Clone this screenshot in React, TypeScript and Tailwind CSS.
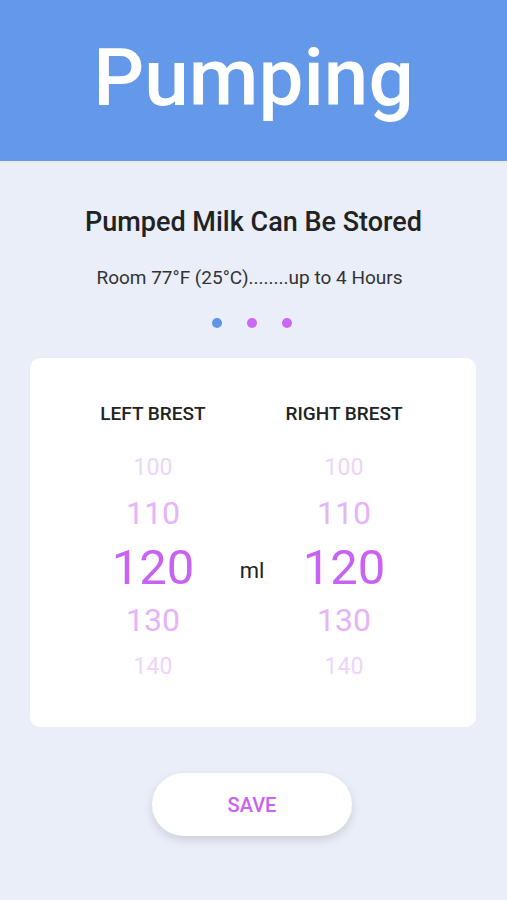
export default function App() {
  const font = { fontFamily: 'Roboto, "Noto Sans", sans-serif' };

  const rows = [
    { v: '100', cls: 'h-[44px] leading-[44px] text-[23px] text-[#efd3fb]' },
    { v: '110', cls: 'h-[47px] leading-[47px] text-[32px] text-[#e5b3f8]' },
    { v: '120', cls: 'h-[61px] leading-[61px] text-[49px] text-[#c962f2]' },
    { v: '130', cls: 'h-[45px] leading-[45px] text-[32px] text-[#e5b3f8]' },
    { v: '140', cls: 'h-[48px] leading-[48px] text-[23px] text-[#efd3fb]' },
  ];

  return (
    <div className="w-[507px] h-[900px] bg-[#e9eef8] flex flex-col" style={font}>
      {/* header */}
      <div className="h-[161px] bg-[#6399e8] flex items-center justify-center">
        <h1 className="text-white text-[80px] leading-none font-medium pb-[6px]">Pumping</h1>
      </div>

      <h2 className="mt-[48px] text-center text-[27px] leading-[26px] font-medium text-[#222]">
        Pumped Milk Can Be Stored
      </h2>
      <p className="mt-[33px] pr-[8px] text-center text-[19px] leading-[19px] text-[#333]">
        Room 77°F (25°C)........up to 4 Hours
      </p>

      <div className="mt-[31px] flex justify-center gap-[25px] pr-[4px]">
        <span className="w-[10px] h-[10px] rounded-full bg-[#5e95e7]" />
        <span className="w-[10px] h-[10px] rounded-full bg-[#cc66f4]" />
        <span className="w-[10px] h-[10px] rounded-full bg-[#cc66f4]" />
      </div>

      {/* picker card */}
      <div className="mt-[30px] ml-[30px] w-[446px] h-[369px] bg-white rounded-[10px] pt-[44px] pl-[53px]">
        <div className="flex h-[24px] leading-[24px] text-[19px] font-medium text-[#222]">
          <div className="w-[140px] text-center whitespace-nowrap">LEFT BREST</div>
          <div className="w-[58px]" />
          <div className="w-[126px] text-center whitespace-nowrap">RIGHT BREST</div>
        </div>

        <div className="mt-[20px] flex">
          <div className="w-[140px] flex flex-col text-center">
            {rows.map((r) => (
              <div key={r.v} className={r.cls}>{r.v}</div>
            ))}
          </div>
          <div className="w-[58px] flex flex-col">
            <div className="h-[91px]" />
            <div className="h-[61px] leading-[61px] text-[22px] text-[#222] text-center pt-[3px]">ml</div>
          </div>
          <div className="w-[126px] flex flex-col text-center">
            {rows.map((r) => (
              <div key={r.v} className={r.cls}>{r.v}</div>
            ))}
          </div>
        </div>
      </div>

      <button className="mt-[46px] ml-[152px] w-[200px] h-[63px] rounded-full bg-white text-[#c962f2] text-[20px] font-medium shadow-[0_4px_10px_rgba(0,0,0,0.13)]">
        SAVE
      </button>
    </div>
  );
}
